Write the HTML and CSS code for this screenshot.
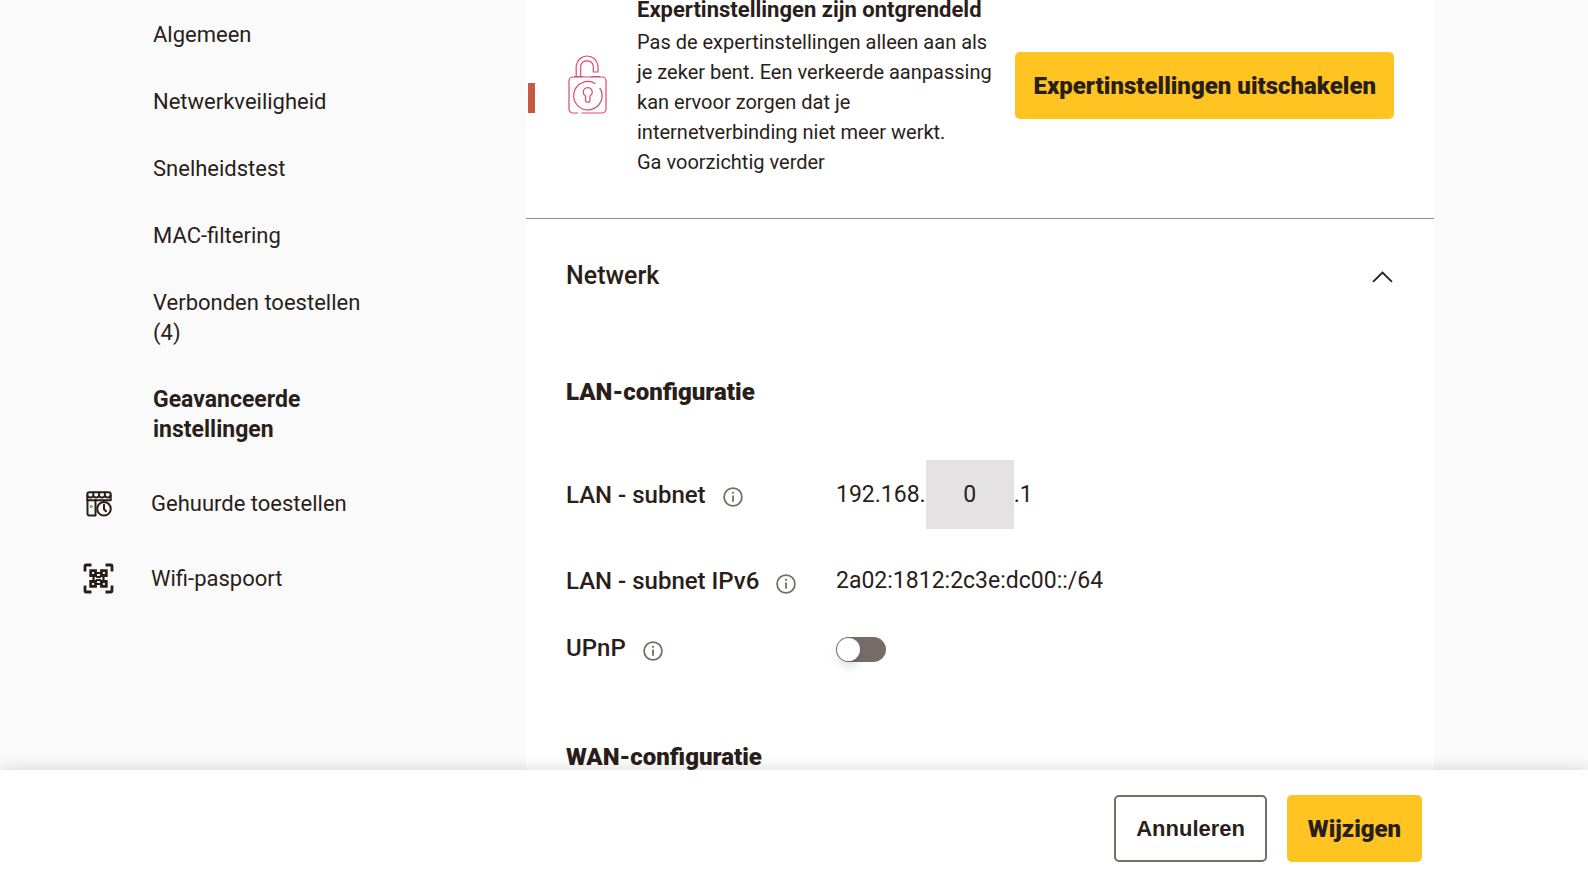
FILE: index.html
```html
<!DOCTYPE html>
<html lang="nl">
<head>
<meta charset="utf-8">
<meta name="viewport" content="width=device-width, initial-scale=1">
<title>Geavanceerde instellingen</title>
<link rel="stylesheet" href="styles.css">
</head>
<body>
<svg class="defs" aria-hidden="true">
  <symbol id="info" viewBox="0 0 20 20">
    <circle cx="10" cy="10" r="8.9" fill="none" stroke="currentColor" stroke-width="1.8"/>
    <path d="M10 8.4v6.400" stroke="currentColor" stroke-width="1.800"/>
    <circle cx="10" cy="5.800" r="1.100" fill="currentColor"/>
  </symbol>
</svg>
<div class="page">
  <nav class="sidebar">
    <ul class="submenu">
      <li><a href="#algemeen">Algemeen</a></li>
      <li><a href="#veiligheid">Netwerkveiligheid</a></li>
      <li><a href="#snelheid">Snelheidstest</a></li>
      <li><a href="#mac">MAC-filtering</a></li>
      <li><a href="#toestellen">Verbonden toestellen (4)</a></li>
      <li><a href="#geavanceerd" class="active" aria-current="page">Geavanceerde instellingen</a></li>
    </ul>
    <ul class="menu">
      <li><a href="#gehuurd">
        <svg class="menu-icon" viewBox="0 0 32 32" fill="none" stroke="currentColor" stroke-width="2" stroke-linejoin="round" stroke-linecap="round">
          <path d="M4.300 12.300V6.300a2 2 0 0 1 2-2h19.400a2 2 0 0 1 2 2v6z"/>
          <path d="M4.500 7.500c.8 2.600 5 2.600 5.800 0V4.500v3c.8 2.600 5 2.600 5.800 0V4.500v3c.8 2.600 5 2.600 5.800 0V4.500v3c.8 2.600 5 2.600 5.600 0"/>
          <path d="M4.500 12v13.500a2 2 0 0 0 2 2h6V12"/>
          <circle cx="8.300" cy="18.500" r=".3"/>
          <circle cx="21" cy="20.800" r="6.800"/>
          <path d="M21 16.800v4.400l2 2"/>
        </svg>
        <span>Gehuurde toestellen</span></a></li>
      <li><a href="#wifi">
        <svg class="menu-icon" viewBox="0 0 32 32" fill="none" stroke="currentColor" stroke-width="2.800">
          <path d="M2 8.500V3a1 1 0 0 1 1-1h5.500M22.500 2H28a1 1 0 0 1 1 1v5.500M29 22.500V28a1 1 0 0 1-1 1h-5.500M8.500 29H3a1 1 0 0 1-1-1v-5.500"/>
          <path d="M7.700 7.700h4.800v4.800H7.700zM18.500 7.700h4.800v4.800h-4.800zM7.700 18.500h4.800v4.800H7.700zM18.500 18.500h4.800v4.800h-4.800z"/>
          <path stroke-width="2.200" d="M12 10h7M12 21h7M10.500 12v7M20.500 12v7M12 12l2 2h3l2-2M12 19l2-2h3l2 2"/>
        </svg>
        <span>Wifi-paspoort</span></a></li>
    </ul>
  </nav>
  <main class="panel">
    <section class="banner">
      <span class="accent"></span>
      <svg class="lock" viewBox="0 0 40 60" fill="none" stroke="#dc4a68" stroke-width="1.200">
        <path d="M8.200 22V11.500a11 11 0 0 1 21.800 0V18h-4.700v-6.200a6.500 6.500 0 0 0-12.600 0V22"/>
        <path d="M6 22.500h9M23 22.500h9M10 59H5a4 4 0 0 1-4-4V27a4 4 0 0 1 4-4h29a4 4 0 0 1 4 4v28a4 4 0 0 1-4 4H13.500"/>
        <path d="M27.500 29.700a14.200 14.200 0 1 0 4.200 4.100"/>
        <path d="M17.500 46v-4a4.500 4.500 0 1 1 4.500 0v4a2.200 2.200 0 0 1-4.500 0z"/>
      </svg>
      <div class="banner-text">
        <h2>Expertinstellingen zijn ontgrendeld</h2>
        <p>Pas de expertinstellingen alleen aan als<br>je zeker bent. Een verkeerde aanpassing<br>kan ervoor zorgen dat je<br>internetverbinding niet meer werkt.<br>Ga voorzichtig verder</p>
      </div>
      <button type="button" class="btn primary">Expertinstellingen uitschakelen</button>
    </section>
    <section class="network">
      <button type="button" class="toggle-section" aria-expanded="true">
        <span>Netwerk</span>
        <svg class="chevron" viewBox="0 0 22 12" fill="none" stroke="currentColor" stroke-width="1.800"><path d="M1 10.800 10.500 1.600l9.500 9.200"/></svg>
      </button>
      <h3>LAN-configuratie</h3>
      <div class="rows">
        <div class="row">
          <label class="name" for="subnet">LAN - subnet <svg class="info"><use href="#info"/></svg></label>
          <div class="value">192.168.<input id="subnet" type="text" value="0">.1</div>
        </div>
        <div class="row">
          <div class="name">LAN - subnet IPv6 <svg class="info"><use href="#info"/></svg></div>
          <div class="value">2a02:1812:2c3e:dc00::/64</div>
        </div>
        <div class="row">
          <label class="name" for="upnp">UPnP <svg class="info"><use href="#info"/></svg></label>
          <div class="value"><input id="upnp" class="switch" type="checkbox" role="switch"></div>
        </div>
      </div>
      <h3 class="next-group">WAN-configuratie</h3>
    </section>
  </main>
</div>
<footer class="actions">
  <button type="button" class="btn secondary">Annuleren</button>
  <button type="button" class="btn primary">Wijzigen</button>
</footer>
</body>
</html>
```
FILE: styles.css
```css
* { box-sizing: border-box; }

body {
  margin: 0;
  height: 100vh;
  overflow: hidden;
  display: flex;
  flex-direction: column;
  background: #fafafa;
  color: #2a1e1a;
  font: 22px/30px Roboto, "Liberation Sans", sans-serif;
}

.defs { display: none; }
ul { list-style: none; margin: 0; padding: 0; }
h2, h3, p { margin: 0; }
a { color: inherit; text-decoration: none; }
button, input { font: inherit; color: inherit; }

.page {
  flex: 1;
  min-height: 0;
  display: flex;
  padding: 0 154px 0 83px;
}

.sidebar { flex: 0 0 443px; padding-top: 20px; }

.submenu {
  display: grid;
  gap: 37px;
  padding-left: 70px;
  width: 284px;
}
.submenu .active { font-size: 23px; font-weight: 700; }

.menu { display: grid; gap: 43px; margin-top: 43px; }
.menu a { display: flex; align-items: center; gap: 36px; }
.menu-icon { width: 32px; height: 32px; flex: none; }

.panel { flex: 1; min-width: 0; background: #fff; }

.banner {
  position: relative;
  display: flex;
  align-items: center;
  margin-top: -6px;
  padding: 0 40px 41px 42px;
  border-bottom: 1px solid #8f8c8a;
}
.accent {
  position: absolute;
  left: 2px;
  top: 89px;
  width: 7px;
  height: 30px;
  background: #c75a44;
}
.lock { width: 40px; height: 60px; margin-bottom: 4px; flex: none; }
.banner-text { flex: 1; margin-left: 29px; font-size: 20px; white-space: nowrap; }
.banner-text h2 { font-size: 22px; line-height: 32px; padding-bottom: 1px; font-weight: 700; }

.btn {
  height: 67px;
  min-width: 135px;
  padding: 0 18px;
  border: 0;
  border-radius: 5px;
  font-size: 24px;
  white-space: nowrap;
}
.primary { background: #ffc421; font-weight: 900; }
.secondary {
  padding: 0 20px;
  background: #fff;
  border: 2px solid #766d69;
  font-family: "Liberation Sans", Arial, sans-serif;
  font-size: 22px;
  font-weight: 700;
}

.network { padding: 42px 40px 0; }
.toggle-section {
  display: flex;
  justify-content: space-between;
  align-items: center;
  width: 100%;
  padding: 0;
  border: 0;
  background: none;
  font-size: 25px;
  font-weight: 500;
}
.chevron { width: 22px; height: 12px; margin-top: 2px; }

h3 { margin-top: 86px; font-size: 24px; font-weight: 900; }
.next-group { margin-top: 79px; }

.rows { margin-top: 53px; display: grid; gap: 37px; }
.row { display: grid; grid-template-columns: 270px 1fr; align-items: center; font-size: 23px; }
.name { display: flex; align-items: center; gap: 17px; font-size: 24px; font-weight: 500; }
.info { width: 20px; height: 20px; margin-top: 5px; color: #766d69; }
.value { display: flex; align-items: center; }
.value input[type="text"] {
  width: 88px;
  height: 69px;
  padding: 0;
  border: 0;
  background: #e5e2e3;
  text-align: center;
}
.switch {
  appearance: none;
  width: 50px;
  height: 25px;
  margin: 3px 0 0;
  border-radius: 13px;
  background: #766d69;
  display: flex;
}
.switch::before {
  content: "";
  width: 23px;
  height: 23px;
  margin: 1px;
  border-radius: 50%;
  background: #fff;
  box-shadow: 0 6px 10px rgba(0, 0, 0, .12);
}

.actions {
  position: relative;
  display: flex;
  justify-content: flex-end;
  gap: 20px;
  padding: 25px 166px 15px;
  background: #fff;
  box-shadow: 0 0 16px rgba(0, 0, 0, .16);
}
```
